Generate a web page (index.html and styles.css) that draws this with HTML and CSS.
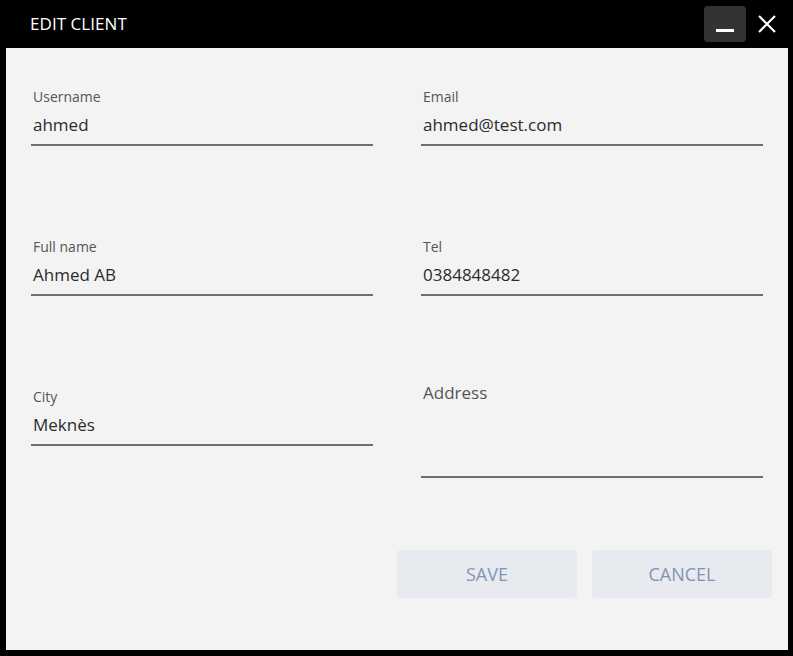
FILE: index.html
```html
<!DOCTYPE html>
<html>
<head>
<meta charset="utf-8">
<link rel="stylesheet" href="styles.css">
</head>
<body>
<div class="window">
  <header class="titlebar">
    <span class="title">EDIT CLIENT</span>
    <div class="controls">
      <button class="btn-min" aria-label="Minimize"><span class="min-bar"></span></button>
      <button class="btn-close" aria-label="Close">
        <svg width="18" height="18" viewBox="0 0 18 18"><path d="M1 1 L17 17 M17 1 L1 17" stroke="#fff" stroke-width="2.2" fill="none"/></svg>
      </button>
    </div>
  </header>
  <main class="content">
    <div class="grid">
      <div class="field"><div class="label">Username</div><div class="value">ahmed</div></div>
      <div class="field"><div class="label">Email</div><div class="value">ahmed@test.com</div></div>
      <div class="field"><div class="label">Full name</div><div class="value">Ahmed AB</div></div>
      <div class="field"><div class="label">Tel</div><div class="value">0384848482</div></div>
      <div class="field"><div class="label">City</div><div class="value">Meknès</div></div>
      <div class="field area"><div class="placeholder">Address</div></div>
    </div>
    <div class="actions">
      <button class="action">SAVE</button>
      <button class="action">CANCEL</button>
    </div>
  </main>
</div>
</body>
</html>
```
FILE: styles.css
```css
html, body {
  margin: 0;
  padding: 0;
  background: #000;
  height: 100%;
}
body {
  font-family: "Open Sans", "Noto Sans", sans-serif;
}
.window {
  width: 793px;
  height: 656px;
  display: flex;
  flex-direction: column;
  background: #000;
}
.titlebar {
  height: 48px;
  display: flex;
  align-items: flex-start;
  justify-content: space-between;
  flex-shrink: 0;
}
.title {
  color: #fff;
  font-size: 17px;
  line-height: 24px;
  margin: 12px 0 0 30px;
  letter-spacing: 0.05px;
}
.controls {
  display: flex;
  align-items: flex-start;
  margin: 6px 17px 0 0;
  gap: 12px;
}
.btn-min {
  width: 42px;
  height: 36px;
  background: #333;
  border: none;
  border-radius: 4px;
  padding: 0;
  display: flex;
  justify-content: center;
  align-items: flex-start;
}
.min-bar {
  width: 18px;
  height: 3px;
  background: #fff;
  margin-top: 23px;
}
.btn-close {
  width: 18px;
  height: 18px;
  background: none;
  border: none;
  padding: 0;
  margin-top: 9px;
  display: block;
}
.btn-close svg { display: block; }
.content {
  flex: 1;
  margin: 0 5px 6px 6px;
  background: #f3f3f3;
  padding: 40px 25px 0 25px;
}
.grid {
  display: grid;
  grid-template-columns: 342px 342px;
  column-gap: 48px;
  row-gap: 92px;
  align-items: start;
}
.field {
  border-bottom: 2px solid #6f6f6f;
  padding: 0 2px 7px 2px;
}
.label {
  font-size: 14px;
  line-height: 18px;
  color: #555;
  margin-bottom: 7px;
}
.value {
  font-size: 17px;
  line-height: 24px;
  color: #2b2b2b;
}
.field.area {
  height: 90px;
  box-sizing: border-box;
  padding-top: 0;
}
.placeholder {
  font-size: 17px;
  line-height: 24px;
  color: #555;
  margin-top: -7px;
}
.actions {
  display: flex;
  justify-content: flex-end;
  gap: 15px;
  margin-top: 72px;
  margin-right: -9px;
}
.action {
  width: 180px;
  height: 48px;
  background: #e7eaef;
  border: none;
  border-radius: 4px;
  color: #8593ba;
  font-family: "Open Sans", "Noto Sans", sans-serif;
  font-size: 18px;
  padding: 0;
}
```
